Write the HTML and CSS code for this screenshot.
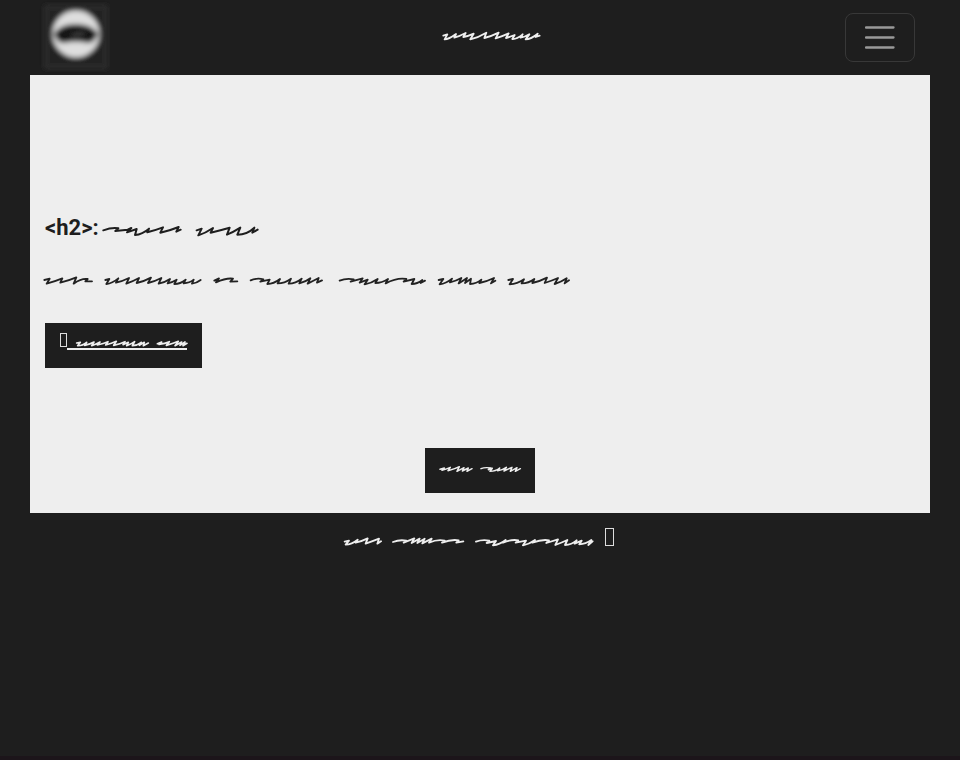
FILE: index.html
```html
<!DOCTYPE html>
<html lang="en">
<head>
<meta charset="utf-8">
<title>Page</title>
<link rel="stylesheet" href="styles.css">
</head>
<body>
<header class="navbar">
  <div class="logo"><svg width="80" height="75" viewBox="30 0 80 75"><defs><filter id="soft" x="-30%" y="-30%" width="160%" height="160%"><feGaussianBlur stdDeviation="2.8"/></filter></defs><g filter="url(#soft)"><rect x="46" y="7" width="60" height="60" fill="#202020" stroke="#303030" stroke-width="3"/><circle cx="76" cy="34" r="23.5" fill="#dedede"/><path d="M54 34Q60 24 75 24Q92 24 98 34Q94 43 88 43Q76 40 64 43Q57 43 54 34Z" fill="#141414"/><path d="M72 36L84 33" stroke="#444" stroke-width="3"/></g></svg></div>
  <svg class="brand scribble" width="120" height="40" viewBox="0 0 360 120"><path d="M40 62L52 58L44 73Q56 73 78 57L73 68Q88 64 107 54L100 66Q114 64 131 56L121 73Q144 68 169 53L163 69Q184 64 206 53L197 70Q214 65 236 55L228 69Q236 67 254 60L247 72Q260 73 278 58L272 68Q286 66 298 58L287 73Q302 73 323 56L317 66L329 62"/></svg>
  <button class="toggler" aria-label="Menu"><svg width="30" height="30" viewBox="0 0 30 30"><path d="M1 5.5H28.5M1 15.5H28.5M1 25.5H28.5"/></svg></button>
</header>
<main class="content">
  <h2 class="heading"><span>&lt;h2&gt;:</span><svg class="scribble" width="170" height="45" viewBox="192 0 510 135"><path d="M205 76Q230 67 250 70L241 78L278 74L289 69L276 82L305 72L300 90Q322 88 342 71L337 82Q360 76 384 67L376 83Q402 78 431 66L424 80L437 74M485 76L500 71L490 91Q512 84 534 69L527 83Q556 76 584 68L576 89Q594 82 616 68L607 89Q636 89 658 68L652 83L668 74"/></svg></h2>
  <svg class="lead scribble" width="560" height="35" viewBox="0 0 1680 105"><path d="M28 54L44 50L35 65Q60 58 82 49L76 62Q100 56 124 46L116 65Q140 48 158 51L151 58L171 58M211 54L223 51L214 66Q232 64 250 49L243 62Q262 58 282 48L274 65Q294 58 312 48L305 63Q328 58 348 47L339 63Q360 58 379 48L371 65Q392 60 405 51L398 64Q414 60 425 53L418 66Q436 66 452 53L446 64Q464 63 476 53L471 65Q484 64 497 54M538 56L552 49L543 61Q574 47 594 50L586 59L607 58M647 55Q666 47 685 52L676 59L704 53L697 66Q716 66 735 51L728 64Q748 64 768 50L761 65Q782 64 800 50L793 64Q812 60 826 49L818 65Q832 58 851 48L846 62L861 55"/><path d="M89 56Q108 48 131 52L122 59L158 49L149 62L173 53L164 67Q184 64 203 51L196 63Q216 63 234 51L227 64Q262 46 289 51L281 59L313 51L305 66Q322 66 337 54L332 63L345 56M386 54L400 51L389 67Q408 65 426 50L420 61Q438 57 454 48L446 64Q460 56 471 48L465 63L483 50L480 66Q500 65 514 53L508 63Q532 58 552 48L543 64L556 56M595 54L609 51L599 67Q622 66 642 52L635 64Q656 64 673 51L667 63Q690 58 711 47L704 63Q726 56 744 48L734 66Q754 60 770 49L764 64L777 55" transform="translate(825)"/></svg>
  <a class="button download"><i class="missing"></i><svg class="scribble" width="120" height="19" viewBox="96 44 360 57"><path d="M125 86L136 84L128 94Q144 94 155 84L149 93Q166 89 177 83L170 94Q184 89 195 83L187 92Q206 88 219 82L212 92Q230 87 244 81L236 93Q256 88 270 82L264 91L280 84L275 94Q290 89 299 82L292 94Q306 94 319 84L313 93L328 84L325 94L340 86M367 88L380 83L372 90Q390 88 403 82L394 93Q416 87 430 81L420 94L440 83L435 93L450 83L444 94L456 87"/></svg></a>
  <div class="more"><a class="button next"><svg class="scribble" width="130" height="60" viewBox="0 0 390 180"><path d="M75 88L88 84L81 91Q96 87 106 82L99 92Q120 87 133 80L126 94L147 83L142 93L160 84L156 94L171 86M198 86Q210 81 228 84L220 89L232 85L225 94Q242 94 254 84L248 92Q264 90 274 82L267 93L291 82L286 94L306 83L301 94L316 86"/></svg></a></div>
</main>
<footer class="footer"><svg class="scribble" width="260" height="40" viewBox="0 0 780 120"><path d="M29 71L42 68L32 80Q50 79 68 65L62 74Q82 69 98 61L92 77Q112 70 132 62L127 77L138 70M174 72Q194 64 214 68L206 74L238 61L230 75L254 62L247 75L269 62L262 76L290 62L282 74Q308 63 329 68L321 74Q350 63 371 67L364 74L385 70M423 71Q442 64 463 68L455 75L483 69L474 82Q494 80 512 66L504 74Q530 63 550 67L542 74L573 68L564 82Q582 79 600 66L592 74Q622 63 642 67L634 75L669 64L661 81Q680 74 697 66L690 81Q710 80 725 67L719 77L740 68L733 79Q752 78 769 66L760 81L773 70"/></svg><i class="missing"></i></footer>
</body>
</html>
```
FILE: styles.css
```css
* { box-sizing: border-box; }
html { background: #1e1e1e; }
body {
  margin: 0;
  height: 760px;
  padding: 0 30px;
  background: #1e1e1e;
  border-bottom: 4px solid #1c151a;
  font-family: Roboto, "Liberation Sans", sans-serif;
}
svg { display: block; }
.scribble {
  fill: none;
  stroke: #eee;
  stroke-width: 5.5;
  stroke-linecap: round;
  stroke-linejoin: round;
}
.navbar {
  display: flex;
  height: 75px;
  padding-right: 15px;
  justify-content: space-between;
  align-items: flex-start;
}
.brand { margin: 15px 0 0 25px; }
.toggler {
  width: 70px;
  height: 49px;
  margin-top: 13px;
  padding: 8px 19px 10px;
  background: transparent;
  border: 1px solid #383838;
  border-radius: 8px;
}
.toggler svg { stroke: #999; stroke-width: 2.3; stroke-linecap: round; }
.content {
  height: 438px;
  padding: 130px 0 0;
  background: #eee;
  color: #1e1e1e;
}
.heading {
  display: flex;
  height: 45px;
  margin: 0 0 12px;
  padding-left: 15px;
  font-size: 22px;
  line-height: 45px;
}
.heading span { width: 54px; white-space: nowrap; }
.content > .scribble { stroke: #222; }
.heading .scribble { stroke: #1e1e1e; stroke-width: 6; }
.lead { margin: 0 0 26px 5px; }
.button { display: flex; background: #1e1e1e; overflow: hidden; }
.missing {
  display: block;
  width: 8px;
  height: 15px;
  border: 1px solid #ddd;
}
.download { width: 157px; height: 45px; margin-left: 15px; padding: 6px 15px 0; }
.download .missing { width: 7px; height: 14px; margin-top: 4px; }
.download .scribble {
  box-sizing: content-box;
  height: 19px;
  border-bottom: 2px solid #eee;
  stroke-width: 5;
  overflow: visible;
}
.more { display: flex; justify-content: center; margin-top: 80px; }
.next { width: 110px; height: 45px; }
.next .scribble { flex: none; margin: -8px 0 0 -10px; stroke-width: 4.5; }
.footer { display: flex; padding: 5px 0 0 305px; }
.footer .missing { width: 9px; height: 18px; margin: 10px 0 0 10px; }
```
